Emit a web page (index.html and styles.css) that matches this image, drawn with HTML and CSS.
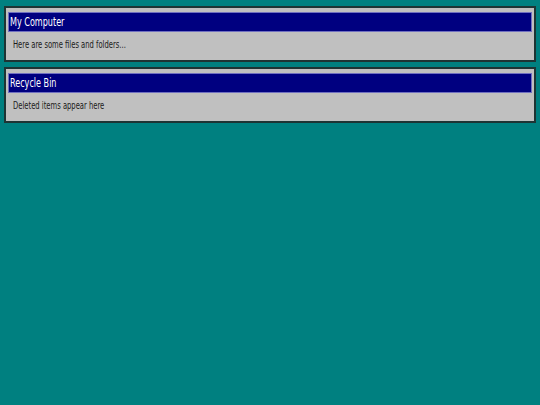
FILE: index.html
```html
<!DOCTYPE html>
<html>
<head>
<meta charset="utf-8">
<link rel="stylesheet" href="styles.css">
</head>
<body>
  <div class="desktop">
    <section class="window">
      <div class="title"><span class="narrow">My Computer</span></div>
      <div class="content"><span class="narrow">Here are some files and folders...</span></div>
    </section>
    <section class="window">
      <div class="title"><span class="narrow">Recycle Bin</span></div>
      <div class="content"><span class="narrow">Deleted items appear here</span></div>
    </section>
  </div>
</body>
</html>
```
FILE: styles.css
```css
html, body {
  margin: 0;
  padding: 0;
  background: #008080;
  height: 100%;
}
.desktop {
  display: flex;
  flex-direction: column;
  gap: 5px;
  padding: 6px 4px;
  font-family: "DejaVu Sans Condensed", "DejaVu Sans", sans-serif;
}
.window {
  background: #c0c0c0;
  border: 2px solid #1e3434;
  padding: 4px 2px 2px;
  height: 56px;
  box-sizing: border-box;
}
.title {
  background: #000080;
  border: 1px solid #7070c0;
  color: #ffffff;
  height: 20px;
  box-sizing: border-box;
  font-size: 11.5px;
  line-height: 18px;
  padding-left: 1px;
  white-space: nowrap;
}
.content {
  font-size: 9.7px;
  color: #1a1a1a;
  padding: 6px 5px 0;
  line-height: 13px;
  white-space: nowrap;
}
.narrow {
  display: inline-block;
  transform: scaleX(0.78);
  transform-origin: left center;
}
```
